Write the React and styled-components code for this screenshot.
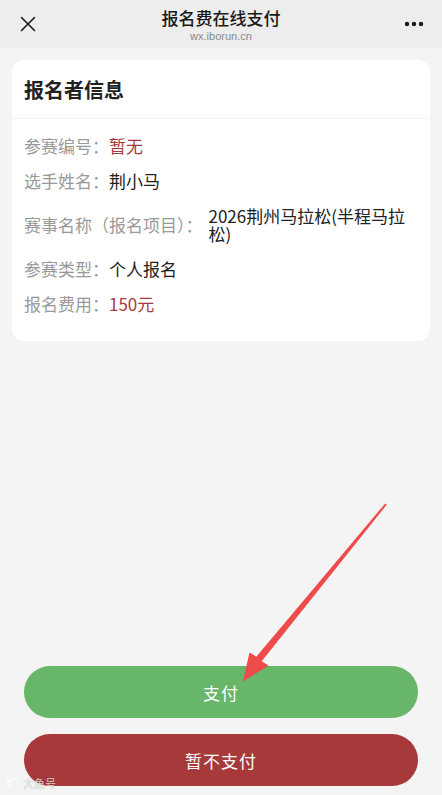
import React from 'react';
import styled, { createGlobalStyle } from 'styled-components';

const GlobalStyle = createGlobalStyle`
  html, body {
    margin: 0;
    padding: 0;
    background: #f4f4f4;
  }
  body {
    font-family: "Noto Sans CJK SC", "Noto Sans", sans-serif;
    color: #222;
  }
`;

const Page = styled.div`
  position: relative;
  display: flex;
  flex-direction: column;
  min-height: 100vh;
  box-sizing: border-box;
`;

const TopBar = styled.header`
  display: grid;
  grid-template-columns: 58px 1fr 58px;
  align-items: center;
  height: 48px;
  background: #ededed;
`;

const IconButton = styled.div`
  display: flex;
  align-items: center;
  justify-content: ${props => props.right ? 'flex-end' : 'flex-start'};
  padding: ${props => props.right ? '0 18px 0 0' : '0 0 0 20px'};
  height: 100%;
`;

const TitleBlock = styled.div`
  display: flex;
  flex-direction: column;
  align-items: center;
  line-height: 1;
`;

const PageTitle = styled.div`
  font-size: 17px;
  font-weight: 500;
  color: #1a1a1a;
  margin-top: 2px;
`;

const Domain = styled.div`
  font-family: "Liberation Sans", Arial, sans-serif;
  font-size: 11px;
  color: #8a8a8a;
  margin-top: 5px;
`;

const Main = styled.main`
  padding: 12px;
`;

const Card = styled.section`
  background: #fff;
  border-radius: 12px;
  overflow: hidden;
`;

const CardTitle = styled.h2`
  margin: 0;
  height: 58px;
  display: flex;
  align-items: center;
  padding: 0 12px;
  font-size: 20px;
  font-weight: 700;
  color: #222;
  border-bottom: 1px solid #f0f0f0;
`;

const List = styled.div`
  display: flex;
  flex-direction: column;
  gap: 17px;
  padding: 18px 14px 28px 12px;
`;

const Row = styled.div`
  display: flex;
  align-items: center;
  font-size: 17px;
  line-height: 18px;
`;

const Label = styled.span`
  flex: none;
  color: #9a9a9a;
`;

const Value = styled.span`
  color: ${props => props.accent ? '#a83a3a' : '#222'};
  padding-left: ${props => props.wide ? '6px' : '0'};
`;

const Spacer = styled.div`
  flex: 1;
`;

const Actions = styled.div`
  display: flex;
  flex-direction: column;
  gap: 16px;
  padding: 0 24px 9px 24px;
`;

const Button = styled.button`
  height: 52px;
  border: none;
  border-radius: 26px;
  background: ${props => props.variant === 'danger' ? '#a8393a' : '#67b669'};
  color: #fff;
  font-family: inherit;
  font-size: 17px;
  letter-spacing: 1px;
`;

const Arrow = styled.svg`
  position: absolute;
  top: 0;
  left: 0;
  pointer-events: none;
`;

const Watermark = styled.div`
  position: absolute;
  left: 6px;
  bottom: 4px;
  display: flex;
  align-items: center;
  gap: 3px;
  font-size: 11px;
  color: rgba(255, 255, 255, 0.75);
  text-shadow: 0 0 1px rgba(0, 0, 0, 0.35);
  pointer-events: none;
`;

const rows = [
  { label: '参赛编号：', value: '暂无', accent: true },
  { label: '选手姓名：', value: '荆小马' },
  { label: '赛事名称（报名项目）：', value: '2026荆州马拉松(半程马拉松)', wide: true },
  { label: '参赛类型：', value: '个人报名' },
  { label: '报名费用：', value: '150元', accent: true },
];

export default function App() {
  return (
    <Page>
      <GlobalStyle />
      <TopBar>
        <IconButton>
          <svg width="16" height="16" viewBox="0 0 16 16">
            <path d="M1.5 1.5 L14.5 14.5 M14.5 1.5 L1.5 14.5" stroke="#1a1a1a" strokeWidth="1.6" strokeLinecap="round" />
          </svg>
        </IconButton>
        <TitleBlock>
          <PageTitle>报名费在线支付</PageTitle>
          <Domain>wx.iborun.cn</Domain>
        </TitleBlock>
        <IconButton right>
          <svg width="20" height="6" viewBox="0 0 20 6">
            <circle cx="3" cy="3" r="2.2" fill="#1a1a1a" />
            <circle cx="10" cy="3" r="2.2" fill="#1a1a1a" />
            <circle cx="17" cy="3" r="2.2" fill="#1a1a1a" />
          </svg>
        </IconButton>
      </TopBar>

      <Main>
        <Card>
          <CardTitle>报名者信息</CardTitle>
          <List>
            {rows.map(r => (
              <Row key={r.label}>
                <Label>{r.label}</Label>
                <Value accent={r.accent} wide={r.wide}>{r.value}</Value>
              </Row>
            ))}
          </List>
        </Card>
      </Main>

      <Spacer />

      <Actions>
        <Button>支付</Button>
        <Button variant="danger">暂不支付</Button>
      </Actions>

      <Arrow width="442" height="795" viewBox="0 0 442 795">
        <polygon
          points="386.8,504.6 261.7,661.2 268.5,665.5 243,681.5 249.5,652.5 256.3,656.8 385.2,503.4"
          fill="#ef4b4b"
        />
      </Arrow>

      <Watermark>
        <svg width="14" height="12" viewBox="0 0 14 12">
          <path d="M2 2 V10 M2 6 L7 2 M2 6 L7 10 M9 2 a2 2 0 1 1 0.1 0" stroke="currentColor" strokeWidth="1.4" fill="none" />
        </svg>
        <span>大鱼号</span>
      </Watermark>
    </Page>
  );
}
